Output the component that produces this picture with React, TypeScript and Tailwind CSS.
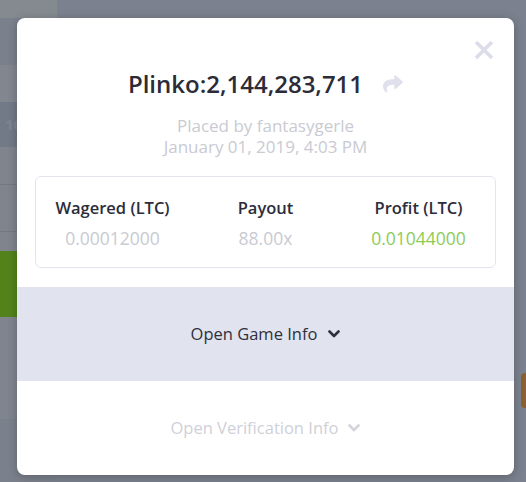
import { FaShare } from "react-icons/fa";

const font = { fontFamily: "'Open Sans', 'Noto Sans', sans-serif" };

const stats = [
  { label: "Wagered (LTC)", value: "0.00012000", tone: "text-[#c9cad2]" },
  { label: "Payout", value: "88.00x", tone: "text-[#c9cad2]" },
  { label: "Profit (LTC)", value: "0.01044000", tone: "text-[#8dcb57]" },
];

function Chevron({ className }: { className: string }) {
  return (
    <svg width="12" height="8" viewBox="0 0 12 8" className={className}>
      <polyline points="1.5,1.5 6,6 10.5,1.5" fill="none" stroke="currentColor" strokeWidth="2.6" strokeLinecap="round" strokeLinejoin="round" />
    </svg>
  );
}

export default function App() {
  return (
    <div className="relative h-[482px] w-[526px] overflow-hidden bg-[#7b818e]" style={font}>
      {/* dimmed page behind the modal */}
      <div className="flex h-full">
        <div className="flex w-[57px] flex-col">
          <div className="h-[18px] bg-[#858a91]" />
          <div className="h-[47px] bg-[#7a818d]" />
          <div className="h-[37px] bg-[#82878f]" />
          <div className="flex h-[45px] items-center bg-[#727a88] pl-[5px] text-[15px] font-bold text-[#7f8692]">16</div>
          <div className="h-[38px] border-b border-[#737884] bg-[#7f848d]" />
          <div className="h-[47px] border-b border-[#737884] bg-[#7f848d]" />
          <div className="h-[19px] bg-[#7f848d]" />
          <div className="h-[66px] bg-[#53821b]" />
          <div className="h-[102px] bg-[#7f848e]" />
          <div className="flex-1 bg-[#7b818c]" />
        </div>
        <div className="flex-1" />
        <div className="flex w-[5px] flex-col pt-[373px]">
          <div className="h-[35px] rounded-l-sm bg-[#8a6230]" />
        </div>
      </div>

      {/* modal */}
      <div className="absolute left-[17px] top-[18px] flex h-[457px] w-[497px] flex-col overflow-hidden rounded-lg bg-white shadow-[0_2px_10px_rgba(0,0,0,0.25)]">
        <button className="absolute right-[20px] top-[22px] text-[#dcdde9]">
          <svg width="20" height="20" viewBox="0 0 20 20">
            <path d="M2 2 L18 18 M18 2 L2 18" stroke="currentColor" strokeWidth="3.6" />
          </svg>
        </button>

        <div className="flex flex-col items-center pt-[50px]">
          <div className="flex items-center">
            <h1 className="text-[24px] font-semibold leading-8 text-[#2b2c38]">Plinko:2,144,283,711</h1>
            <FaShare className="ml-[20px] text-[#dfe0ec]" size={20} />
          </div>
          <p className="mt-[15px] text-[17px] leading-[21px] text-[#c9cad2]">Placed by fantasygerle</p>
          <p className="text-[17px] leading-[21px] text-[#c9cad2]">January 01, 2019, 4:03 PM</p>
        </div>

        <div className="mx-[18px] mt-[19px] grid h-[92px] grid-cols-3 rounded-md border border-[#e3e5ef] pt-[20px]">
          {stats.map((s) => (
            <div key={s.label} className="flex flex-col items-center">
              <span className="text-[16.5px] font-semibold leading-[22px] text-[#2b2d3a]">{s.label}</span>
              <span className={`mt-[8px] text-[17.5px] leading-[22px] ${s.tone}`}>{s.value}</span>
            </div>
          ))}
        </div>

        <button className="mt-[19px] flex h-[94px] items-center justify-center gap-[11px] bg-[#e1e3ef] text-[16.5px] text-[#2e303c]">
          Open Game Info
          <Chevron className="text-[#2e303c]" />
        </button>
        <button className="flex flex-1 items-center justify-center gap-[10px] text-[16.5px] text-[#cfd0d8]">
          Open Verification Info
          <Chevron className="text-[#d3d4dc]" />
        </button>
      </div>
    </div>
  );
}
